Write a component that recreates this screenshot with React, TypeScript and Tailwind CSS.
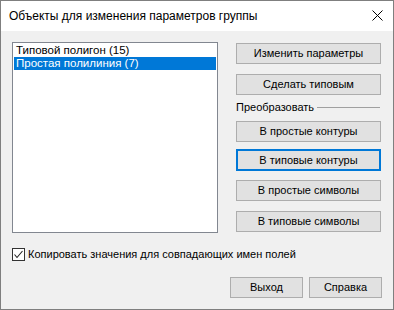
import React from 'react';

const Btn: React.FC<{ label: string; focused?: boolean; className?: string }> = ({ label, focused, className = '' }) => (
  <div
    className={`flex items-center justify-center bg-[#e1e1e1] text-[11px] leading-none text-black ${
      focused ? 'border-2 border-[#0078d7]' : 'border border-[#adadad]'
    } ${className}`}
  >
    {label}
  </div>
);

export default function App() {
  const [copy, setCopy] = React.useState(true);
  return (
    <div className="w-[394px] h-[310px] flex flex-col border border-[#7f7f7f] bg-[#f0f0f0] font-['Liberation_Sans',Arial,sans-serif] text-black select-none">
      {/* Title bar */}
      <div className="h-[30px] shrink-0 bg-white flex items-center justify-between pl-[8px] pr-[9px]">
        <span className="text-[12px] pb-[1px]">Объекты для изменения параметров группы</span>
        <svg width="11" height="11" viewBox="0 0 11 11" className="mr-[1px] mb-[1px]">
          <path d="M0.5 0.5 L10.5 10.5 M10.5 0.5 L0.5 10.5" stroke="#000" strokeWidth="1" fill="none" />
        </svg>
      </div>

      {/* Body */}
      <div className="flex-1 flex flex-col pt-[11px] pl-[11px] pr-[11px]">
        <div className="flex gap-[18px]">
          <div className="w-[206px] h-[191px] border border-[#828790] bg-white pt-[1px] px-[1px] text-[11.5px] leading-[13px]">
            <div className="pl-[2px] h-[13px]">Типовой полигон (15)</div>
            <div className="pl-[2px] h-[13px] bg-[#0078d7] text-white">Простая полилиния (7)</div>
          </div>

          <div className="w-[145px] flex flex-col pt-[1px]">
            <Btn label="Изменить параметры" className="h-[21px]" />
            <Btn label="Сделать типовым" className="h-[21px] mt-[10px]" />
            <div className="flex items-center h-[15px] mt-[5px] text-[11px]">
              <span className="pr-[3px]">Преобразовать</span>
              <div className="flex-1 h-px bg-[#a0a0a0] mr-[1px]" />
            </div>
            <Btn label="В простые контуры" className="h-[21px] mt-[6px]" />
            <Btn label="В типовые контуры" focused className="h-[22px] mt-[7px]" />
            <Btn label="В простые символы" className="h-[21px] mt-[9px]" />
            <Btn label="В типовые символы" className="h-[21px] mt-[10px]" />
          </div>
        </div>

        <label className="flex items-center mt-[15px] text-[11px] h-[13px]" onClick={() => setCopy(!copy)}>
          <span className="w-[13px] h-[13px] border border-[#333] bg-white flex items-center justify-center mr-[3px]">
            {copy && (
              <svg width="11" height="11" viewBox="0 0 11 11">
                <path d="M1.5 5.5 L4 8.5 L9.5 2" stroke="#222" strokeWidth="1.1" fill="none" />
              </svg>
            )}
          </span>
          <span>Копировать значения для совпадающих имен полей</span>
        </label>

        <div className="flex justify-end gap-[6px] mt-[16px]">
          <Btn label="Выход" className="w-[73px] h-[21px]" />
          <Btn label="Справка" className="w-[73px] h-[21px]" />
        </div>
      </div>
    </div>
  );
}
